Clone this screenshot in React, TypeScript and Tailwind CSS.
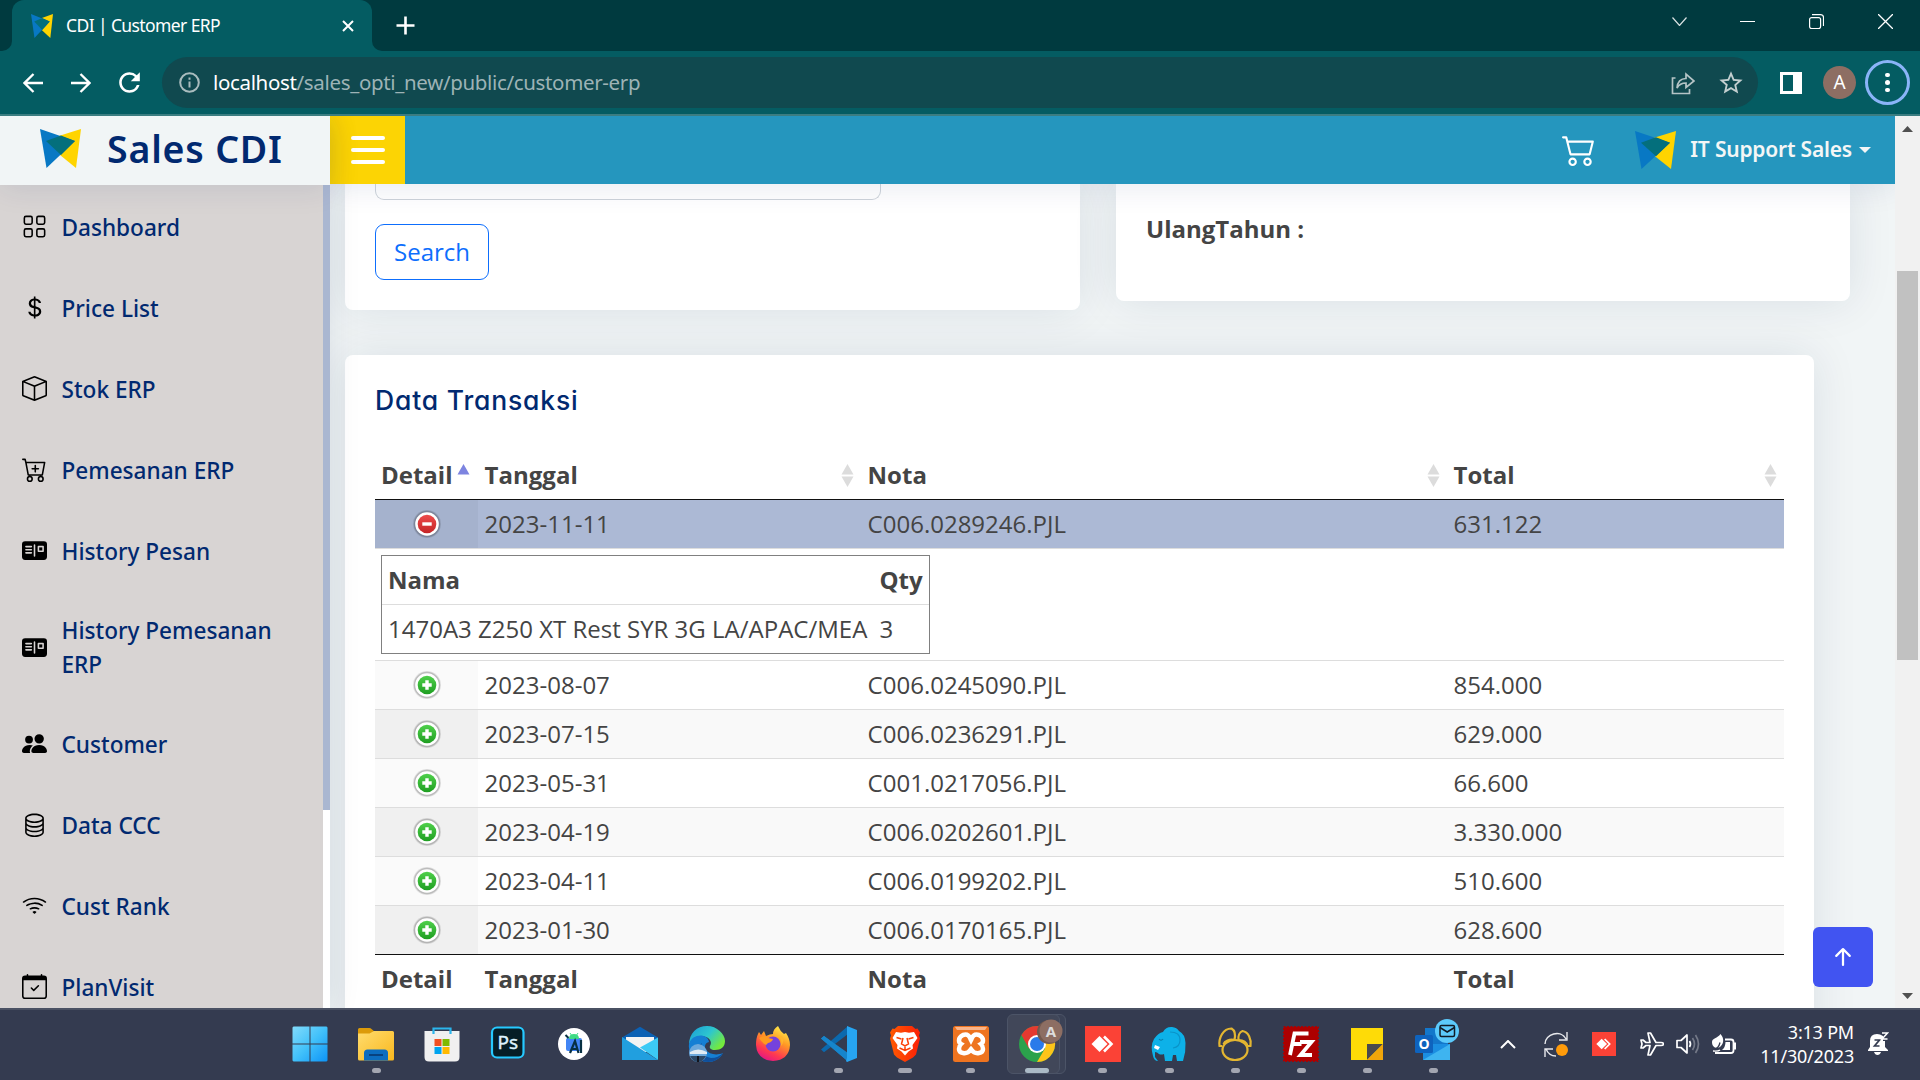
import React from "react";
import {
  BsGrid, BsCurrencyDollar, BsBox, BsCartPlus, BsPostcardFill, BsPeopleFill, BsDatabase, BsWifi,
  BsCalendarCheck, BsCart2, BsArrowUpShort,
} from "react-icons/bs";
import { MdStarBorder, MdRefresh } from "react-icons/md";

const menu = [
  { icon: BsGrid, label: "Dashboard", h: "h-[81px]" },
  { icon: BsCurrencyDollar, label: "Price List", h: "h-[81px]" },
  { icon: BsBox, label: "Stok ERP", h: "h-[81px]" },
  { icon: BsCartPlus, label: "Pemesanan ERP", h: "h-[81px]" },
  { icon: BsPostcardFill, label: "History Pesan", h: "h-[81px]" },
  { icon: BsPostcardFill, label: "History Pemesanan ERP", h: "h-[112px]" },
  { icon: BsPeopleFill, label: "Customer", h: "h-[81px]" },
  { icon: BsDatabase, label: "Data CCC", h: "h-[81px]" },
  { icon: BsWifi, label: "Cust Rank", h: "h-[81px]" },
  { icon: BsCalendarCheck, label: "PlanVisit", h: "h-[81px]" },
];

const rows = [
  ["2023-08-07", "C006.0245090.PJL", "854.000"],
  ["2023-07-15", "C006.0236291.PJL", "629.000"],
  ["2023-05-31", "C001.0217056.PJL", "66.600"],
  ["2023-04-19", "C006.0202601.PJL", "3.330.000"],
  ["2023-04-11", "C006.0199202.PJL", "510.600"],
  ["2023-01-30", "C006.0170165.PJL", "628.600"],
];

const grid = "grid grid-cols-[103px_383px_586px_337px]";

function Logo({ className }: { className: string }) {
  return (
    <svg className={className} viewBox="0 0 41 39" preserveAspectRatio="none">
      <path d="M41 0 L36 39 L20 26 L6 11 Z" fill="#ffd400" />
      <path d="M0 0 L35 12 L6.500 39 Z" fill="#0878c4" />
      <path d="M6 12 L21 6.500 L35 12 L21 26 Z" fill="#046f7c" />
    </svg>
  );
}

function TabStrip() {
  return (
    <div className="flex h-[51px] shrink-0 bg-[#003a3f] text-white">
      <div className="flex h-full w-[12px] flex-col justify-end bg-[#045c62]">
        <div className="h-full rounded-br-[10px] bg-[#003a3f]" />
      </div>
      <div className="bg-[#003a3f]">
        <div className="flex h-[51px] w-[360px] items-center rounded-t-[12px] bg-[#045c62] pl-[19px] pr-[18px]">
          <Logo className="h-[24px] w-[22px]" />
          <span className="ml-[13px] whitespace-nowrap text-[17.500px] tracking-[-0.6px] text-white">CDI | Customer ERP</span>
          <svg className="ml-auto h-3 w-3" viewBox="0 0 12 12" stroke="white" strokeWidth="2"><path d="M1 1l10 10M11 1L1 11" /></svg>
        </div>
      </div>
      <div className="h-full w-[12px] bg-[#045c62]">
        <div className="h-full rounded-bl-[10px] bg-[#003a3f]" />
      </div>
      <svg className="ml-[12px] mt-[16px] h-[19px] w-[19px]" viewBox="0 0 19 19" stroke="white" strokeWidth="2.600"><path d="M9.500 0.500v18M0.500 9.500h18" /></svg>
      <div className="ml-auto flex h-[43px] items-center pr-[27px]">
        <svg className="mr-[53px] h-[9px] w-[15px]" viewBox="0 0 15 9" fill="none" stroke="#d9e2e3" strokeWidth="1.200"><path d="M0.500 0.500l7 8 7-8" /></svg>
        <div className="mr-[54px] h-px w-[15px] bg-white" />
        <svg className="mr-[54px] h-[15px] w-[15px]" viewBox="0 0 15 15" fill="none" stroke="white" strokeWidth="1.200"><rect x="0.600" y="3.600" width="11" height="11" rx="2" /><path d="M3 .6h8.500a3 3 0 0 1 3 3V12" /></svg>
        <svg className="h-[15px] w-[15px]" viewBox="0 0 15 15" stroke="white" strokeWidth="1.300"><path d="M0 0l15 15M15 0L0 15" /></svg>
      </div>
    </div>
  );
}

function Toolbar() {
  return (
    <div className="flex h-[65px] shrink-0 items-center border-b-2 border-[#3b7d81] bg-[#045c62] pl-[23px] pr-[10px]">
      <svg className="h-[20px] w-[20px]" viewBox="0 0 20 20" fill="none" stroke="white" strokeWidth="2.300"><path d="M20 10H2M10.500 1L1.500 10l9 9" /></svg>
      <svg className="ml-[28px] h-[20px] w-[20px]" viewBox="0 0 20 20" fill="none" stroke="white" strokeWidth="2.300"><path d="M0 10h18M9.500 1l9 9-9 9" /></svg>
      <MdRefresh className="ml-[23px] h-[31px] w-[31px] text-white" />
      <div className="ml-[17px] flex h-[51px] w-[1596px] shrink-0 items-center rounded-full bg-[#10494f] pl-[17px] pr-[13px]">
        <svg className="h-[21px] w-[21px]" viewBox="0 0 21 21" fill="none" stroke="#a9bcbe" strokeWidth="2"><circle cx="10.500" cy="10.500" r="9.300" /><path d="M10.500 9.500v6M10.500 5.500v2.300" /></svg>
        <span className="ml-[13px] whitespace-nowrap text-[20.500px] tracking-[-0.34px] text-[#9db3b6]"><span className="text-white">localhost</span>/sales_opti_new/public/customer-erp</span>
        <svg className="ml-auto h-[24px] w-[24px]" viewBox="0 0 24 24" fill="none" stroke="#b5c4c6" strokeWidth="1.700"><path d="M4.500 7H1.500v15.500h17V18M6 17c.5-6 4-9.500 9-9.500V3l8 7-8 6.500V12c-4 0-7 1.500-9 5z" /></svg>
        <MdStarBorder className="ml-[22px] h-[28px] w-[28px] text-[#c3cfd0]" />
      </div>
      <div className="ml-[22px] h-[22px] w-[22px] border-[3px] border-r-[9px] border-white" />
      <div className="ml-[21px] flex h-[33px] w-[33px] items-center justify-center rounded-full bg-[#8d6e63] text-[19px] text-white">A</div>
      <div className="ml-[9px] flex h-[45px] w-[45px] flex-col items-center justify-center gap-[3px] rounded-full border-[3px] border-[#8ab4f8]">
        <i className="h-[4.500px] w-[4.500px] rounded-full bg-white" /><i className="h-[4.500px] w-[4.500px] rounded-full bg-white" /><i className="h-[4.500px] w-[4.500px] rounded-full bg-white" />
      </div>
    </div>
  );
}

function Sidebar() {
  return (
    <aside className="relative z-20 flex w-[330px] shrink-0 flex-col shadow-[0_0_30px_rgba(1,41,80,0.1)]">
      <div className="relative z-10 flex h-[69px] shrink-0 items-center bg-[#f1f5f6] pb-[4px] pl-[40px] shadow-[0_3px_30px_rgba(1,41,112,0.1)]">
        <Logo className="h-[39px] w-[41px]" />
        <span className="ml-[26px] whitespace-nowrap font-['Noto_Sans'] text-[37.500px] font-semibold leading-none tracking-[0.8px] text-[#012970]">Sales CDI</span>
      </div>
      <div className="flex min-h-0 grow">
        <nav className="w-[323px] overflow-hidden bg-[#d8d4d3] pt-[1px] font-['Noto_Sans'] text-[22.600px] font-medium leading-[34px] text-[#012970]">
          {menu.map((m, i) => (
            <div key={i} className={`flex items-center pl-[22px] pr-6 ${m.h}`}>
              <m.icon className="h-[25px] w-[25px] shrink-0 text-black" />
              <span className="relative top-[1px] ml-[14.500px]">{m.label}</span>
            </div>
          ))}
        </nav>
        <div className="w-[7px] bg-white"><div className="h-[625px] bg-[#aab7d1]" /></div>
      </div>
    </aside>
  );
}

function SortIcon({ active }: { active?: boolean }) {
  return (
    <svg className="h-[23px] w-[13px]" viewBox="0 0 13 23">
      <path d="M6.500 0l6 10.500h-12z" fill={active ? "#7d84e0" : "#dcdcdc"} />
      {!active && <path d="M6.500 23l6-10.500h-12z" fill="#dcdcdc" />}
    </svg>
  );
}

function Toggle({ open }: { open?: boolean }) {
  return (
    <svg className="h-[28px] w-[28px]" viewBox="0 0 28 28">
      <defs>
        <linearGradient id="tg" x2="0" y2="1"><stop stopColor="#4fd04b" /><stop offset="1" stopColor="#1f9e22" /></linearGradient>
        <linearGradient id="tr" x2="0" y2="1"><stop stopColor="#ee4b4b" /><stop offset="1" stopColor="#c42527" /></linearGradient>
      </defs>
      <circle cx="14" cy="14" r="14" fill="#000" opacity=".1" />
      <circle cx="14" cy="14" r="13.200" fill="#000" opacity=".16" />
      <circle cx="14" cy="14" r="11.800" fill="#fff" />
      <circle cx="14" cy="14" r="9.300" fill={open ? "url(#tr)" : "url(#tg)"} />
      <path d={open ? "M9.300 14h9.400" : "M9.300 14h9.400M14 9.300v9.400"} stroke="#fff" strokeWidth="3.400" />
    </svg>
  );
}

function Transactions() {
  return (
    <section className="mt-[45px] h-[700px] w-[1469px] rounded-[8px] bg-white px-[30px] shadow-[0_0_45px_rgba(1,41,80,0.1)]">
      <h5 className="pt-[29px] font-['Inter'] text-[26.500px] font-medium leading-[32px] tracking-[0.82px] text-[#012970] [font-feature-settings:'cv11']">Data Transaksi</h5>
      <div className="mt-[35px]">
        <div className={`${grid} h-[49px] border-b border-[#111] font-bold`}>
          <div className="flex items-center pl-[6px]">Detail<span className="ml-[4px]"><SortIcon active /></span></div>
          {["Tanggal", "Nota", "Total"].map((t) => (
            <div key={t} className="flex items-center justify-between pl-[6.600px] pr-[7.500px]">{t}<SortIcon /></div>
          ))}
        </div>
        <div className={`${grid} h-[49px] border-b border-[#ddd] bg-[#acb9d5]`}>
          <div className="flex items-center justify-center bg-[#a5b2cd]"><Toggle open /></div>
          {["2023-11-11", "C006.0289246.PJL", "631.122"].map((t) => <div key={t} className="flex items-center pl-[6.600px]">{t}</div>)}
        </div>
        <div className="h-[112px] border-b border-[#ddd] pl-[6px] pt-[6px]">
          <div className="w-[549px] border border-[#808080]">
            <div className="flex h-[49px] items-center border-b border-[#ddd] px-[6px] font-bold"><span className="w-[491.500px]">Nama</span>Qty</div>
            <div className="flex h-[48px] items-center px-[6px]"><span className="w-[491.500px] whitespace-nowrap">1470A3 Z250 XT Rest SYR 3G LA/APAC/MEA</span>3</div>
          </div>
        </div>
        {rows.map((r, i) => (
          <div key={i} className={`${grid} h-[49px] border-b ${i === 5 ? "border-[#111]" : "border-[#ddd]"} ${i % 2 ? "bg-[#f9f9f9]" : "bg-white"}`}>
            <div className={`flex items-center justify-center ${i % 2 ? "bg-[#f0f0f0]" : "bg-[#fafafa]"}`}><Toggle /></div>
            {r.map((t) => <div key={t} className="flex items-center pl-[6.600px]">{t}</div>)}
          </div>
        ))}
        <div className={`${grid} h-[48px] font-bold`}>
          {["Detail", "Tanggal", "Nota", "Total"].map((t, i) => <div key={t} className={`flex items-center ${i ? "pl-[6.600px]" : "pl-[6px]"}`}>{t}</div>)}
        </div>
      </div>
    </section>
  );
}

function Main() {
  return (
    <div className="relative flex w-[1565px] shrink-0 flex-col overflow-hidden">
      <header className="relative z-10 flex h-[68px] shrink-0 items-center bg-[#2596be] shadow-[0_3px_30px_rgba(1,41,112,0.1)]">
        <div className="flex h-full w-[75px] flex-col items-center justify-center gap-[8.500px] bg-[#fcd404]">
          <i className="h-[3.600px] w-[34px] rounded-full bg-white" /><i className="h-[3.600px] w-[34px] rounded-full bg-white" /><i className="h-[3.600px] w-[34px] rounded-full bg-white" />
        </div>
        <BsCart2 className="mb-[3px] ml-auto h-[34px] w-[34px] text-white" />
        <Logo className="ml-[39px] h-[38px] w-[41px]" />
        <span className="ml-[14px] whitespace-nowrap font-['Noto_Sans'] text-[21px] font-semibold tracking-[-0.2px] text-[#f4f6f6]">IT Support Sales</span>
        <svg className="ml-[7px] mr-[24px] h-[6px] w-[12px]" viewBox="0 0 12 6"><path d="M0 0h12l-6 6z" fill="#f4f6f6" /></svg>
      </header>
      <div className="h-[824px] bg-[#f1f5f6] pl-[15px] font-['Open_Sans'] text-[24px] leading-[36px] text-[#444]">
        <div className="flex items-start">
          <div className="h-[126px] w-[735px] rounded-b-[8px] bg-white px-[30px] shadow-[0_0_45px_rgba(1,41,80,0.1)]">
            <div className="h-[16px] w-[506px] rounded-b-[9px] border border-t-0 border-[#ced4da]" />
            <button className="mt-[24px] flex h-[56px] w-[114px] items-center justify-center rounded-[9px] border border-[#0d6efd] text-[#0d6efd]">Search</button>
          </div>
          <div className="ml-[36px] h-[117px] w-[734px] rounded-b-[8px] bg-white px-[30px] pt-[27px] font-bold shadow-[0_0_45px_rgba(1,41,80,0.1)]">UlangTahun :</div>
        </div>
        <Transactions />
      </div>
      <div className="absolute bottom-[21px] right-[22px] flex h-[60px] w-[60px] items-center justify-center rounded-[6px] bg-[#4154f1] text-white"><BsArrowUpShort className="h-[36px] w-[36px]" /></div>
    </div>
  );
}

function Scrollbar() {
  return (
    <div className="flex w-[25px] flex-col items-center bg-[#f1f1f1]">
      <svg className="mt-[10px] h-[6px] w-[11px]" viewBox="0 0 11 6"><path d="M5.500 0L11 6H0z" fill="#505050" /></svg>
      <div className="mt-[139px] h-[389px] w-[21px] bg-[#c1c1c1]" />
      <svg className="mb-[9px] mt-auto h-[6px] w-[11px]" viewBox="0 0 11 6"><path d="M5.500 6L11 0H0z" fill="#505050" /></svg>
    </div>
  );
}

const AnyDesk = ({ className }: { className: string }) => (
  <svg className={className} width="36" height="36" viewBox="0 0 36 36"><path d="M0 0h36v36H0z" fill="#fb4236" /><path d="M6.500 18l8-8 8 8-8 8z" fill="#fff" /><path d="M19 10.500l7.500 7.500-7.500 7.500" fill="none" stroke="#fff" strokeWidth="2.600" /></svg>
);

const taskIcons: { art: React.ReactNode; bar?: string }[] = [
  { art: <><defs><linearGradient id="w" gradientUnits="userSpaceOnUse" x1="0" y1="0" x2="36" y2="36"><stop stopColor="#84dcfb" /><stop offset=".5" stopColor="#42c1fa" /><stop offset="1" stopColor="#0b92f6" /></linearGradient></defs><path d="M1.500 .5H17.500v17H.5v-16zM18.500 .5H34.500l1 1v16h-17zM.5 18.500h17v17h-16l-1-1zM18.500 18.500h17v16l-1 1h-16z" fill="url(#w)" /></> },
  { bar: "w-[9px]", art: <><defs><linearGradient id="f" x2="1" y2="1"><stop stopColor="#ffdc6e" /><stop offset="1" stopColor="#f9b81e" /></linearGradient></defs><path d="M0 10V3.500Q0 2 1.500 2h10q1 0 2 1l3 2.500L13 9z" fill="#dc9b0a" /><path d="M0 7.500h11.500l4.500-2.500h18.500q1.500 0 1.500 1.500v26.500q0 1.500-1.500 1.500H1.500Q0 34.500 0 33z" fill="url(#f)" /><path d="M6 34.500V27q0-3.500 3.500-3.500h17q3.500 0 3.500 3.500v7.500z" fill="#0c6dbf" /><path d="M11 29h14" stroke="#08427f" strokeWidth="2" /></> },
  { art: <><path d="M.5 5h35v26q0 4.500-4.500 4.500H5Q.5 35.500.5 31z" fill="#f0f0f0" /><path d="M9.500 8V2.500h17V8" fill="none" stroke="#2bb5ec" strokeWidth="2.200" /><path d="M10.500 13h7v7h-7z" fill="#f25022" /><path d="M18.500 13h7v7h-7z" fill="#7fba00" /><path d="M10.500 21h7v7h-7z" fill="#00a4ef" /><path d="M18.500 21h7v7h-7z" fill="#ffb900" /></> },
  { art: <><rect x="2" y="1.500" width="31.500" height="30" rx="5" fill="#061e26" stroke="#26c9ff" strokeWidth="2.200" /><text x="17.800" y="23" textAnchor="middle" fontSize="19" fill="#dff4ff" stroke="#dff4ff" strokeWidth=".5" fontFamily="Open Sans, sans-serif">Ps</text></> },
  { art: <><circle cx="18" cy="18" r="16" fill="#fff" /><path d="M10 14q0-2 2-2h12q2 0 2 2v11H12q-2 0-2-2z" fill="#4285f4" /><path d="M13 13q0-5 5-5t5 5z" fill="#3ddc84" /><path d="M14 7l2 3M22 7l-2 3" stroke="#3ddc84" /><path d="M14 27l5-12 3.500 12M16 23h6M25 14v13" fill="none" stroke="#073042" strokeWidth="2.200" /><path d="M9.500 9l3 3" stroke="#073042" strokeWidth="2" /></> },
  { art: <><path d="M0 11.500L18 .8 36 11.500V20H0z" fill="#0b61b4" /><path d="M4 11h28v15H4z" fill="#f3f3f3" /><path d="M36 11.500L18 21.500l18 12.500z" fill="#3ccaf5" /><path d="M0 11l36 23H0z" fill="#219fdf" /></> },
  { art: <><defs><linearGradient id="e" x2="1" y2=".6"><stop stopColor="#1a9bd7" /><stop offset=".55" stopColor="#2dc6cf" /><stop offset="1" stopColor="#74ea3d" /></linearGradient></defs><path d="M0 19C0 7 8 0 18 0s18 8 18 15c0 6-4 9-10 9-4 0-6-2-5-4 2-3 1-7-4-9C9 8 2 13 0 19z" fill="url(#e)" /><path d="M0 18C3 7 19 7 20 16c-4 1-5 4-3 8 3 4 10 6 17 3-5 9-15 11-23 7C3 30-1 25 0 18z" fill="#157fd4" /><path d="M13 17c-3 7 1 14 9 15 5 0 9-2 12-5-5 9-15 11-23 7-5-6-4-13 2-17z" fill="#104f9b" /><circle cx="9" cy="27" r="9" fill="#6ca8dc" /><path d="M1 26q8-5 17 0v2H1z" fill="#e0ebf4" /><path d="M1 30h16q-3 6-8 6t-8-6z" fill="#2c4867" /><path d="M8 30h2v6H8z" fill="#13151e" /></> },
  { art: <><defs><linearGradient id="ff" x1=".8" y1="0" x2=".3" y2="1"><stop stopColor="#fff44f" /><stop offset=".4" stopColor="#ff9a24" /><stop offset=".75" stopColor="#ff3950" /><stop offset="1" stopColor="#e31587" /></linearGradient></defs><path d="M3 8l1-2 2 3 3-4 2 5q4-2 7-2Q18 3 23 0q2 5 6 8l2-1q4 6 4 12-1 15-17 16Q2 34 1 19 1 12 3 8z" fill="url(#ff)" /><circle cx="18" cy="18" r="7.500" fill="#7542dc" /><path d="M4 12q6-4 9 0l5 1q-1 3-5 4l-2 2q-4-2-7-7z" fill="#ff9a1f" /><path d="M20 9q8 2 6 11 4-5 1-10z" fill="#ffb62c" /></> },
  { bar: "w-[9px]", art: <><path d="M0 12.500l3-2.500 24 19v6.500L0 12.500z" fill="#1387cf" /><path d="M0 23.500l3 2.800L27 8V0L0 23.500z" fill="#0b69ae" /><path d="M0 12.500l3-2.500 24 17v8.500z" fill="#1685cc" /><path d="M26 0l10 4v28l-10 4-1-1 1-3z" fill="#27a5f1" /></> },
  { bar: "w-[14px]", art: <><defs><linearGradient id="br" x2="1" y2="0"><stop stopColor="#ff5a00" /><stop offset="1" stopColor="#fb2007" /></linearGradient></defs><path d="M11 0h14l3.500 3 2-.500 2.500 4-1 3 1 3-4 16-3 3-8 4.500L10 31.500l-3-3-4-16 1-3-1-3 2.500-4 2 .500z" fill="url(#br)" /><path d="M9 6l5 .8 4-.8 4 .8 5-.8 3.500 6-5 7 .500 3.500-4.500 3-3.500 4-3.500-4-4.500-3 .500-3.500-5-7z" fill="#fff" /><path d="M9.500 11.500l5 1.500M26.500 11.500l-5 1.500M16 12l-1.500 6 3.500 2 3.500-2L20 12M12.500 22l5.500 2.500 5.500-2.500M18 20v4" fill="none" stroke="#fc3f04" strokeWidth="1.500" /></> },
  { bar: "w-[9px]", art: <><rect width="36" height="36" rx="2.500" fill="#ee7420" /><path d="M2 1h32l-2 3H4z" fill="#f9b58a" /><path d="M10 9c6-2 7 3 8 5 1-2 2-7 8-5 6 3 4 8 2 9 2 2 4 8-2 9-6 1-7-3-8-4-1 1-2 5-8 4-6-1-4-7-2-9-2-1-4-6 2-9z" fill="none" stroke="#fff" strokeWidth="4.500" /></> },
  { bar: "w-[24px]", art: <><circle cx="18" cy="18" r="18" fill="#2ba24c" /><path d="M2.400 9A18 18 0 0 1 33.600 9H18z" fill="#e53a30" /><path d="M2.400 9L10 22.500 18 18V9z" fill="#e53a30" /><path d="M33.600 9A18 18 0 0 1 18 36l8-13.500L18 9z" fill="#fcc41a" /><circle cx="18" cy="18" r="9" fill="#fff" /><circle cx="18" cy="18" r="7" fill="#2a7bea" /><circle cx="30" cy="6" r="12" fill="#72594f" /><circle cx="32" cy="5" r="11.500" fill="#8d6e63" /><text x="32" y="10.500" textAnchor="middle" fontSize="15" fontWeight="700" fill="#ddd" fontFamily="Noto Sans, sans-serif">A</text></> },
  { bar: "w-[9px]", art: <AnyDesk className="h-9 w-9" /> },
  { bar: "w-[9px]", art: <><path d="M7 35q-4 0-5-5Q-1 20 3 13 7 7 12 6q3-5.500 9-5 5 .5 7 4 6 3 6.500 12 .500 9-2.500 18h-6l-1-6h-3l-1 6h-7l-1-7q-3 1-5 0-2-2-4-2l0 5z" fill="#0db1e8" /><path d="M19 6q10 0 10 8 0 7-7 8" fill="none" stroke="#0a94c9" strokeWidth="1.200" /><path d="M4 19l5 2-2 3-4-2z" fill="#fff" /><path d="M8 13q2 2.500 4 0" stroke="#087ba8" strokeWidth="1.200" fill="none" /></> },
  { bar: "w-[9px]", art: <g fill="none" stroke="#e3b631" strokeWidth="2.200" strokeLinejoin="round"><ellipse cx="18" cy="24" rx="12.500" ry="10" /><path d="M5 20H2.500C1.500 12 6 2.500 14.500 2.500c3.500 2 4 7 3 11.500M6.500 18c1-3 6-5 11-4M21.500 14c-.5-4 1-8 4-9 6 1 9 8 8 15h-3c-1-4-4-6-9-6z" /></g> },
  { bar: "w-[9px]", art: <><rect x="1" y="1" width="34" height="34" fill="#ac0000" /><rect x=".5" y=".5" width="35" height="35" fill="none" stroke="#ac0000" strokeWidth="1" strokeDasharray="2 1.500" /><path d="M7 29L11.500 7.500h14M9 18h9.500M17 16h11.500L17.500 29H29" fill="none" stroke="#fff" strokeWidth="3.800" /></> },
  { bar: "w-[9px]", art: <><path d="M2 2h32v17L19 34H2z" fill="#fedb07" /><path d="M18 18h16L18 34z" fill="#494a4d" /><path d="M34 18v16H18z" fill="#f1a60b" /></> },
  { bar: "w-[9px]", art: <><path d="M10 2h23v24H10z" fill="#1377cb" /><path d="M8 18h27v16H8z" fill="#1b8ee1" /><path d="M35 18L8 34h27z" fill="#3eb4f0" /><rect y="9" width="18" height="18" rx="1.500" fill="#0e63be" /><text x="9" y="23" textAnchor="middle" fontSize="14" fontWeight="700" fill="#fff" fontFamily="Open Sans, sans-serif">O</text><circle cx="32" cy="5" r="12" fill="#5ccafb" /><rect x="25" y="-.5" width="14.500" height="11" rx="1.500" fill="none" stroke="#111b26" strokeWidth="1.500" /><path d="M25 1.500l7.200 4.500L39.500 1.500" fill="none" stroke="#111b26" strokeWidth="1.500" /></> },
];

function Taskbar() {
  return (
    <footer className="flex h-[72px] shrink-0 border-t-2 border-[#4a5163] bg-[#343b50] text-white">
      <div className="ml-[277px] flex pt-[4px]">
        {taskIcons.map((t, i) => (
          <div key={i} className="relative flex h-[60px] w-[66.090px] flex-col items-center">
            {i === 11 && <><div className="absolute inset-y-0 left-[8px] w-[54px] rounded-[6px] border border-[#4c5467] bg-[#3b4256]" /><div className="absolute inset-y-0 left-[3px] w-[53px] rounded-[6px] border border-[#4c5467] bg-[#414759]" /></>}
            <svg className="relative mt-[12px] h-[36px] w-[36px] shrink-0 overflow-visible" viewBox="0 0 36 36">{t.art}</svg>
            {t.bar && <div className={`relative mt-[6px] h-[5px] rounded-full ${t.bar} ${i === 11 ? "bg-[#abbac6]" : "bg-[#a3a6b1]"}`} />}
          </div>
        ))}
      </div>
      <div className="ml-auto flex items-center pb-[2px] pr-[31px]">
        <svg className="h-[9px] w-[16px]" viewBox="0 0 16 9" fill="none" stroke="#fff" strokeWidth="2"><path d="M1 8l7-7 7 7" /></svg>
        <svg className="ml-[28px] h-[25px] w-[24px]" viewBox="0 0 24 25" fill="none" stroke="#e8e9ed" strokeWidth="1.400"><path d="M1 12C1 2 17-3 22 7M23 0v8h-8M1 25v-8h8M2 17q3 7 10 7" /><circle cx="18" cy="18" r="6" fill="#ff9b0b" stroke="none" /></svg>
        <AnyDesk className="ml-[24px] h-6 w-6" />
        <svg className="ml-[24px] h-[24px] w-[24px]" viewBox="0 0 24 24" fill="none" stroke="#fff" strokeWidth="1.700" strokeLinejoin="round"><path d="M1 8h2l3 2.500h4L8 1h2.500l5.500 9.500h5q2.500 0 2.500 1.500t-2.500 1.500h-5L10.500 23H8l2-9.500H6L3 16H1l1-4z" /></svg>
        <svg className="ml-[12px] h-[22px] w-[24px]" viewBox="0 0 24 22" fill="none" stroke="#fff" strokeWidth="1.700" strokeLinejoin="round"><path d="M1 7.500h4L11 2v18l-6-5.500H1z" /><path d="M13.500 8q2 3 0 6" /><path d="M16.500 5q4 6 0 12M19.500 2q6 9 0 18" stroke="#747988" /></svg>
        <svg className="ml-[12px] h-[21px] w-[24px]" viewBox="0 0 24 21" fill="none" stroke="#fff" strokeWidth="1.800"><path d="M13 5.500h6q2.500 0 2.500 2.500v8.500q0 2.500-2.500 2.500H3" /><path d="M22 9.500h1.500v5H22" fill="#fff" /><path d="M8.500 0c4.500 5 3 11-1.500 13.500-4 1-7-1-7-5.500 0-4 5.500-3.500 8.500-8z" fill="#fff" stroke="none" /><path d="M1 15.500q5.500 0 7-7" stroke="#343b50" strokeWidth="1.300" /><path d="M13.500 8H18v8h-8q3.500-3 3.500-8z" fill="#fff" stroke="none" /><path d="M1 17q5 .5 7-1" strokeWidth="1.500" /></svg>
        <div className="ml-[25px] w-[93px] whitespace-nowrap text-right text-[18px] leading-[24px] tracking-[-0.2px]"><div>3:13 PM</div><div className="-ml-4">11/30/2023</div></div>
        <svg className="ml-[14px] h-[24px] w-[21px]" viewBox="0 0 21 24"><path d="M0 18l2-3V9q0-7 7-7 3 0 6 2v5h2v6l3 3v1H0zM6 20h7q-1 3-3.500 3T6 20z" fill="#fff" /><path d="M6.500 8h5l-5 6h5" stroke="#343b50" strokeWidth="1.700" fill="none" /><path d="M14 1h5.500L14 7h5.500" stroke="#fff" strokeWidth="1.500" fill="none" /></svg>
      </div>
    </footer>
  );
}

export default function App() {
  return (
    <div className="flex h-[1080px] w-[1920px] flex-col overflow-hidden font-['Noto_Sans',sans-serif]">
      <TabStrip />
      <Toolbar />
      <main className="flex h-[892px] shrink-0 overflow-hidden bg-[#f1f5f6]">
        <Sidebar />
        <Main />
        <Scrollbar />
      </main>
      <Taskbar />
    </div>
  );
}
